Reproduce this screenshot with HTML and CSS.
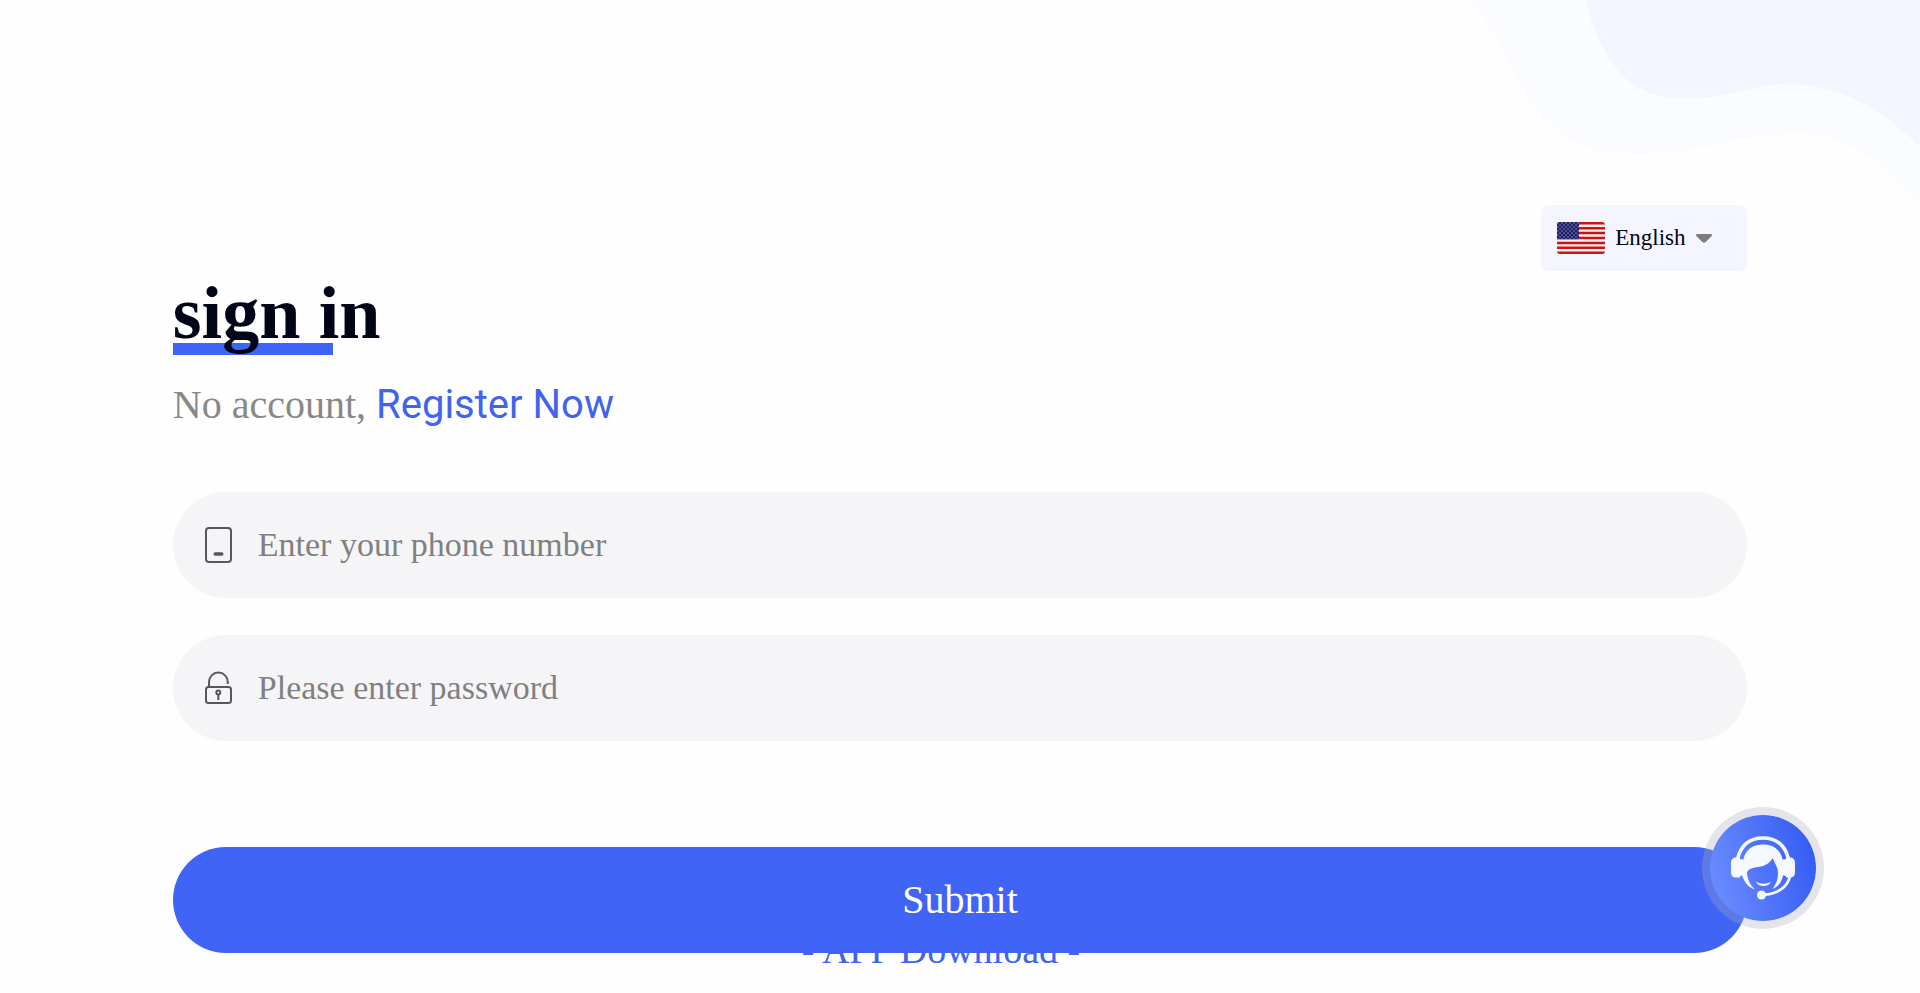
FILE: index.html
```
<!DOCTYPE html>
<html lang="en">

<head>
    <meta charset="UTF-8">
    <meta name="viewport" content="width=device-width, initial-scale=1.0">
    <title>Sign in</title>
    <link rel="stylesheet" href="styles.css">
</head>

<body>
    <svg class="waves" viewBox="0 0 460 210" aria-hidden="true">
        <path fill="#fbfcff" d="M10 0C34 22 50 70 72 104C98 142 135 154 178 154C240 154 290 132 340 133C390 136 430 168 460 203V0Z" />
        <path fill="#f3f6ff" d="M126 0C134 30 146 58 164 76C184 94 205 99 232 98C275 97 295 84 325 84C375 84 415 102 460 146V0Z" />
    </svg>

    <main class="login">
        <label class="lang">
            <svg class="flag" viewBox="0 0 48 32" aria-hidden="true">
                <defs>
                    <clipPath id="flagClip">
                        <rect width="48" height="32" rx="3" />
                    </clipPath>
                    <pattern id="stars" width="4" height="4" patternUnits="userSpaceOnUse">
                        <circle cx="1" cy="1" r="0.7" fill="#a9a9d6" />
                        <circle cx="3" cy="3" r="0.7" fill="#a9a9d6" />
                    </pattern>
                </defs>
                <g clip-path="url(#flagClip)">
                    <rect width="48" height="32" fill="#fbeeee" />
                    <path stroke="#c81414" stroke-width="2.46" d="M0 1.23H48M0 6.15H48M0 11.08H48M0 16H48M0 20.92H48M0 25.85H48M0 30.77H48" />
                    <rect width="22" height="17.2" fill="#1f1f66" />
                    <rect width="22" height="17.2" fill="url(#stars)" />
                </g>
            </svg>
            <select class="lang-select" aria-label="Language">
                <option>English</option>
            </select>
            <svg class="caret" viewBox="0 0 16 9" aria-hidden="true">
                <path fill="#7d7d82" d="M1.5 0H14.5C16 0 16.4 1.5 15.3 2.5L9.6 8C8.6 9 7.4 9 6.4 8L0.7 2.5C-.4 1.5 0 0 1.5 0Z" />
            </svg>
        </label>

        <h1 class="title">sign in</h1>
        <p class="register">No account, <a href="#">Register Now</a></p>

        <form class="form">
            <label class="field">
                <svg class="icon" viewBox="0 0 28 36" aria-hidden="true">
                    <rect x="1" y="1" width="25" height="34" rx="3" />
                    <path stroke-width="3.4" stroke-linecap="round" d="M10.2 27H16.8" />
                </svg>
                <input type="text" placeholder="Enter your phone number" aria-label="Phone number">
            </label>
            <label class="field">
                <svg class="icon" viewBox="0 0 28 36" aria-hidden="true">
                    <rect x="1" y="17" width="25" height="16" rx="2.5" />
                    <path d="M4 17V12A9.4 9.4 0 0 1 22.8 12V14" />
                    <circle cx="13.3" cy="22.6" r="2" />
                    <path d="M13.3 24.5V30" />
                </svg>
                <input type="password" placeholder="Please enter password" aria-label="Password">
            </label>
            <button class="submit" type="submit">Submit</button>
        </form>

        <div class="download">
            <a href="#">- APP Download -</a>
        </div>
    </main>

    <button class="service" type="button" aria-label="Customer service">
        <svg viewBox="0 0 64 64" aria-hidden="true">
            <path fill="none" stroke="#f6f8ff" stroke-width="3.6" d="M6.5 23C10 9 19 2 32 2S54 9 57.5 23" />
            <path fill="#f6f8ff" d="M5 21.5H9V23L14 24V39L9 40V41.5H5C2 41.5 0 39.5 0 36.5V27C0 23.5 2 21.5 5 21.5ZM59 21.5H55V23L50 24V39L55 40V41.5H59C62 41.5 64 39.5 64 36.5V27C64 23.5 62 21.5 59 21.5Z" />
            <path fill="#f6f8ff" d="M12 25C14 14 21 8.5 32 8.5S50 14 52 25V39C51 46 47 51 41.5 53C46 47 48 40 46.5 33C45.5 29 43 26 41.5 22C38 29 32 30.5 24 31.5C18.5 32.5 16 34 16 38C17 44 19 49 24 53.5C17 51 13 46 11 39Z" />
            <path fill="#f6f8ff" d="M25 45.5C29 48.5 36 48.5 40 45.5C38 51.5 27 51.5 25 45.5Z" />
            <path fill="none" stroke="#f6f8ff" stroke-width="2.8" d="M59 40C57 51 46 58.5 32 58.7" />
            <circle cx="30.5" cy="59" r="4.5" fill="#f6f8ff" />
        </svg>
    </button>
</body>

</html>
```
FILE: styles.css
```
* {
    box-sizing: border-box;
}

body {
    margin: 0;
    background-color: #fefefe;
    font-family: "Liberation Serif", serif;
    color: #000417;
}

a {
    color: #4064f0;
    text-decoration: none;
}

.waves {
    position: absolute;
    top: 0;
    right: 0;
    width: 24%;
}

.login {
    position: relative;
    display: flex;
    flex-direction: column;
    padding: 205px 9% 0;
}

.lang {
    display: flex;
    align-items: center;
    align-self: flex-end;
    gap: 10px;
    height: 66px;
    padding: 0 35px 0 16px;
    border-radius: 8px;
    background-color: #f4f5ff;
}

.flag {
    width: 48px;
    height: 32px;
}

.lang-select {
    appearance: none;
    border: none;
    padding: 0 0 2px;
    background: none;
    color: inherit;
    font: 23px "Liberation Serif", serif;
}

.caret {
    width: 16px;
    height: 9px;
}

.title {
    align-self: flex-start;
    margin: 0;
    font-size: 74px;
    line-height: 84px;
    background: linear-gradient(#4064f6, #4064f6) 0 100% / 160px 12px no-repeat;
}

.register {
    margin: 26px 0 0;
    font-size: 40px;
    line-height: 48px;
    color: #888;
}

.register a {
    font-family: Roboto, sans-serif;
}

.form {
    display: flex;
    flex-direction: column;
    margin-top: 63px;
}

.field {
    display: flex;
    align-items: center;
    gap: 25px;
    height: 106px;
    margin-bottom: 37px;
    padding: 0 32px;
    border-radius: 53px;
    background-color: #f5f5f8;
}

.icon {
    width: 28px;
    height: 36px;
    fill: none;
    stroke: #58585a;
    stroke-width: 2;
}

.field input {
    flex: 1;
    border: none;
    padding: 0;
    outline: none;
    background: none;
    font: 34px "Liberation Serif", serif;
}

.field input::placeholder {
    color: #808080;
}

.submit {
    position: relative;
    z-index: 1;
    height: 106px;
    margin-top: 69px;
    padding: 0 0 2px;
    border: none;
    border-radius: 53px;
    background-color: #4064f6;
    color: white;
    font: 40px "Liberation Serif", serif;
    cursor: pointer;
}

/* the link is partly tucked under the submit button */
.download {
    margin-top: -25px;
    padding-right: 38px;
    text-align: center;
    font-size: 38px;
    line-height: 44px;
}

.service {
    position: fixed;
    right: 5%;
    bottom: 64px;
    z-index: 2;
    display: flex;
    align-items: center;
    justify-content: center;
    width: 122px;
    height: 122px;
    padding: 0;
    border: 8px solid rgba(170, 172, 190, 0.3);
    border-radius: 50%;
    background: linear-gradient(75deg, #7090ff, #3058f2) padding-box;
    cursor: pointer;
}

.service svg {
    width: 64px;
    height: 64px;
}
```
